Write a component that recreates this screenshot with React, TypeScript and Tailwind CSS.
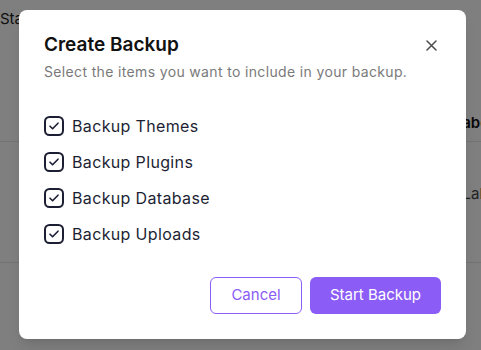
import React from "react";

function CheckIcon() {
  return (
    <svg width="20" height="20" viewBox="0 0 20 20" fill="none" className="shrink-0">
      <rect x="1" y="1" width="18" height="18" rx="4.5" stroke="#1c1f33" strokeWidth="2" />
      <path d="M6 10.2 L8.6 12.8 L14 7.2" stroke="#1c1f33" strokeWidth="1.6" strokeLinecap="round" strokeLinejoin="round" />
    </svg>
  );
}

export default function App() {
  const items = ["Backup Themes", "Backup Plugins", "Backup Database", "Backup Uploads"];
  return (
    <div className="relative h-[350px] w-[481px] overflow-hidden bg-white" style={{ fontFamily: "Inter, 'Noto Sans', sans-serif" }}>
      {/* underlying page */}
      <div className="flex flex-col">
        <div className="pt-[9px] pl-0 text-[15px] text-[#222] leading-[20px]">Status</div>
        <div className="mt-[77px] h-[36px] border-b border-[#e5e7eb] flex items-center justify-end pr-0">
          <span className="text-[15px] font-semibold text-[#111] translate-x-[12px]">Label</span>
        </div>
        <div className="h-[121px] border-b border-[#e5e7eb] flex items-center justify-end">
          <span className="text-[15px] text-[#444] translate-x-[20px] -translate-y-[8px]">Label</span>
        </div>
      </div>

      {/* overlay */}
      <div className="absolute inset-0 bg-black/50">
        <div className="ml-[19px] mt-[10px] w-[447px] h-[329px] rounded-[8px] bg-white shadow-lg flex flex-col px-[25px] pt-[21px] relative">
          <button className="absolute right-[20px] top-[20px] w-[30px] h-[30px] flex items-center justify-center text-[#555]">
            <svg width="11" height="11" viewBox="0 0 11 11" fill="none">
              <path d="M1 1 L10 10 M10 1 L1 10" stroke="#4b4b4b" strokeWidth="1.5" strokeLinecap="round" />
            </svg>
          </button>
          <h2 className="text-[19px] leading-[28px] font-semibold text-[#111]">Create Backup</h2>
          <p className="mt-[3px] text-[14px] leading-[20px] tracking-[0.35px] text-[#7a7a7a]">Select the items you want to include in your backup.</p>
          <div className="mt-[26px] flex flex-col">
            {items.map((it) => (
              <label key={it} className="h-[36px] flex items-center gap-[8px]">
                <CheckIcon />
                <span className="text-[16px] tracking-[0.35px] text-[#1c1f33]">{it}</span>
              </label>
            ))}
          </div>
          <div className="mt-[25px] flex justify-end gap-[8px]">
            <button className="w-[92px] h-[37px] rounded-[6px] border border-[#8b5cf6] text-[#8b5cf6] text-[15px]">Cancel</button>
            <button className="w-[131px] h-[37px] rounded-[6px] bg-[#8b5cf6] text-white text-[15px]">Start Backup</button>
          </div>
        </div>
      </div>
    </div>
  );
}
